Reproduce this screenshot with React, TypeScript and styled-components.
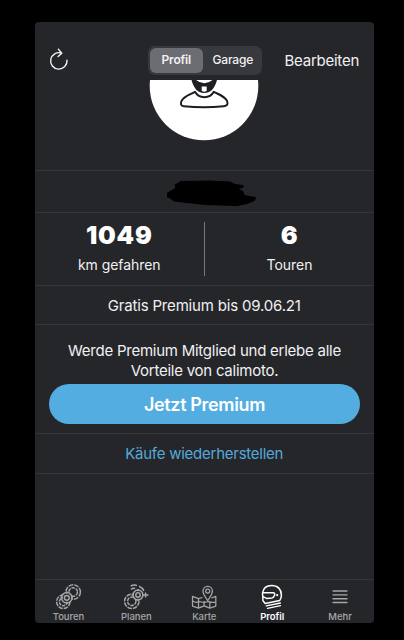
import React from "react";
import styled, { createGlobalStyle } from "styled-components";

const GlobalStyle = createGlobalStyle`
  body { margin: 0; background: #000; }
  * { box-sizing: border-box; }
  button { border: 0; padding: 0; margin: 0; background: none; font: inherit; color: inherit; }
`;

const Screen = styled.div`
  width: 404px;
  height: 640px;
  padding: 22px 30px 17px 34.5px;
  background: #000;
  overflow: hidden;
  font-family: Inter, "Liberation Sans", sans-serif;
  color: #f1f1f2;
`;

const Phone = styled.main`
  width: 339.5px;
  height: 601px;
  display: flex;
  flex-direction: column;
  background: #25262a;
  border-radius: 4px;
  overflow: hidden;
`;

const Header = styled.header`
  height: 58px;
  flex: none;
  padding: 23px 15px 5px 14.5px;
  display: grid;
  grid-template-columns: 99px 114px 97px;
  align-items: center;
`;

const RefreshButton = styled.button`
  width: 20px;
  height: 24px;
  margin-top: -3px;
  display: flex;
`;

const Segments = styled.div`
  height: 29px;
  padding: 2px;
  display: flex;
  border-radius: 7px;
  background: #38393e;
`;

const Segment = styled.button<{ $active?: boolean }>`
  width: ${(p) => (p.$active ? 53 : 57)}px;
  height: 25px;
  padding-left: ${(p) => (p.$active ? 0 : 2)}px;
  margin-left: ${(p) => (p.$active ? 0 : 1)}px;
  border-radius: 6px;
  background: ${(p) => (p.$active ? "#6c6c73" : "transparent")};
  font-size: 12px;
  line-height: 23px;
  padding-bottom: 2px;
  font-weight: ${(p) => (p.$active ? 600 : 500)};
  letter-spacing: ${(p) => (p.$active ? -0.2 : -0.2)}px;
  white-space: nowrap;
`;

const EditButton = styled.button`
  justify-self: end;
  font-size: 15px;
  letter-spacing: -0.25px;
  white-space: nowrap;
`;

const line = "1px solid #35363a";

const AvatarArea = styled.section`
  height: 90px;
  flex: none;
  display: flex;
  justify-content: center;
  overflow: hidden;
`;

const NameRow = styled.section`
  height: 42px;
  flex: none;
  border-top: ${line};
  display: flex;
  justify-content: center;
  padding: 9px 0 0 16px;
`;

const Stats = styled.section`
  height: 73px;
  flex: none;
  border-top: ${line};
  display: grid;
  grid-template-columns: 169.5px 1px 169px;
  padding-top: 9px;
`;

const Divider = styled.div`
  height: 54px;
  background: #77787b;
`;

const Stat = styled.div`
  display: flex;
  flex-direction: column;
  align-items: center;
`;

const StatValue = styled.strong`
  font-size: 25px;
  line-height: 26px;
  font-weight: 900;
  letter-spacing: 0.8px;
  color: #fff;
`;

const StatLabel = styled.span`
  margin-top: 8px;
  font-size: 14px;
  line-height: 18px;
  letter-spacing: -0.05px;
`;

const TextRow = styled.section<{ $height: number; $link?: boolean }>`
  height: ${(p) => p.$height}px;
  flex: none;
  border-top: ${line};
  display: flex;
  align-items: center;
  justify-content: center;
  font-size: 15px;
  letter-spacing: ${(p) => (p.$link ? -0.25 : -0.18)}px;
  color: ${(p) => (p.$link ? "#54a9da" : "inherit")};
`;

const Promo = styled.section`
  height: 109px;
  flex: none;
  border-top: ${line};
  padding: 16px 14px 0 14.5px;
  text-align: center;
`;

const PromoText = styled.p`
  margin: 0 0 4px;
  font-size: 15px;
  line-height: 19.5px;
  letter-spacing: -0.25px;
  white-space: nowrap;
`;

const PremiumButton = styled.button`
  width: 311px;
  height: 40px;
  border-radius: 20px;
  background: #54ade1;
  color: #fff;
  font-size: 18px;
  font-weight: 600;
  letter-spacing: -0.35px;
`;

const Empty = styled.div`
  flex: 1;
  border-top: ${line};
`;

const TabBar = styled.nav`
  height: 44px;
  flex: none;
  border-top: ${line};
  display: grid;
  grid-template-columns: repeat(5, 1fr);
`;

const Tab = styled.button<{ $active?: boolean }>`
  display: flex;
  flex-direction: column;
  align-items: center;
  padding-top: 3px;
  color: ${(p) => (p.$active ? "#fff" : "#a5a6a8")};
  font-size: 9.5px;
  line-height: 12px;
  font-weight: ${(p) => (p.$active ? 600 : 500)};
  letter-spacing: -0.05px;
`;

const TabIcon = styled.svg`
  width: 28px;
  height: 28px;
  fill: none;
  stroke: currentColor;
  overflow: visible;
`;

const TourIcon = () => (
  <TabIcon viewBox="0 0 28 28" strokeWidth="1.5">
    <circle cx="19.2" cy="9" r="7.2" strokeDasharray="4.7 1.1" />
    <circle cx="19.2" cy="9" r="4.3" strokeDasharray="3.6 .9" />
    <circle cx="9.3" cy="18.8" r="6.7" strokeDasharray="4.5 1" />
    <circle cx="9.3" cy="18.8" r="3.9" strokeDasharray="3.2 .9" />
    <circle cx="12.8" cy="14.8" r="5.2" fill="#25262a" />
    <circle cx="12.8" cy="14.8" r="2.4" />
    <path d="M12.8 8.6v2.2M12.8 18.8V21M6.6 14.8h2.2M16.8 14.8H19" />
  </TabIcon>
);

const PlanIcon = () => (
  <TabIcon viewBox="0 0 28 28" strokeWidth="1.5">
    <circle cx="9.8" cy="18.3" r="7.2" strokeDasharray="4.6 1" />
    <circle cx="9.8" cy="18.3" r="4.2" strokeDasharray="3.5 .9" />
    <path d="M8.7 3.2c2.2-1.3 4.3-1.4 6.3-.6M9 6.4c1.4-1 2.7-1.3 4.2-.9M17 3.2c2.4 1 4 2.5 4.9 4.7" />
    <circle cx="16" cy="12" r="4.9" fill="#25262a" />
    <circle cx="16" cy="12" r="2.2" />
    <path d="M9.7 12h2.2M20 12h6.5M16 6v2.2M16 15.8V18M23.6 9.5v5" />
  </TabIcon>
);

const MapIcon = () => (
  <TabIcon viewBox="0 0 28 28" strokeWidth="1.25" strokeLinejoin="round">
    <path d="M12.5 14.5l-4 1.1-6-2.2v9.7l6 2 5.6-2.3 5.7 2.3 6-2v-9.7l-4.5 1.6" />
    <path d="M17.7 17.7c-1.8-3.3-4.7-6-4.7-9.7a4.7 4.7 0 0 1 9.4 0c0 3.7-2.9 6.4-4.7 9.7z" />
    <circle cx="17.7" cy="8" r="2" />
    <path d="M8.5 15.6v9.5M14.1 18v4.8M19.8 19v6.1M2.8 18c2.3 1.7 4.3 1.5 5.5.8 2.2-.7 3.5.8 5.7.6s4.2-1.2 6-.6 3.4 1.2 5.5.2" />
  </TabIcon>
);

const HelmetIcon = () => (
  <TabIcon viewBox="0 0 28 28" strokeWidth="1.5" strokeLinecap="round" strokeLinejoin="round">
    <path d="M7.2 20.5L5 17.8l-.5-7.6C5.2 5.2 8.5 2.5 13.7 2.5c6 0 9.7 3.9 9.7 9.4 0 2.4-.6 4.3-1.7 5.6L7.2 20.5z" />
    <path d="M4.7 9.8h10.4c1.2 0 1.9.8 1.6 1.9l-.5 1.4c-.4 1.2-1.1 1.7-2.3 1.9l-5.4.4-3.5-1.8" />
    <circle cx="19.2" cy="12.2" r="1.1" fill="currentColor" stroke="none" />
    <path d="M8.2 22.9l14.2-2.9M9.5 25.4l13-2.7" strokeWidth="1.3" />
  </TabIcon>
);

const MenuIcon = () => (
  <TabIcon viewBox="0 0 28 28" strokeWidth="1.4">
    <path d="M6.5 8h15M6.5 11.9h15M6.5 15.7h15M6.5 19.5h15" />
  </TabIcon>
);

export default function App() {
  return (
    <>
      <GlobalStyle />
      <Screen>
        <Phone>
          <Header>
            <RefreshButton aria-label="Aktualisieren">
              <svg width="20" height="24" viewBox="0 0 20 24" fill="none" stroke="#f1f1f2" strokeWidth="1.4" strokeLinecap="round" strokeLinejoin="round">
                <path d="M18 13.2a8.2 8.2 0 1 1-5.6-7.1M9.4 2.2l3.4 4-3.7 3.4" />
              </svg>
            </RefreshButton>
            <Segments>
              <Segment $active>Profil</Segment>
              <Segment>Garage</Segment>
            </Segments>
            <EditButton>Bearbeiten</EditButton>
          </Header>
          <AvatarArea>
            <svg width="110" height="61" viewBox="0 0 110 61">
              <circle cx="55" cy="6" r="54.3" fill="#fff" />
              <path d="M42.500 0C45 9 49 13 55.200 13S65.500 9 68 0h-4.500q-8 6.500-16.500 0z" fill="#1e1f22" />
              <path d="M52.700 6.600h5v4.200q-2.500 2-5 0z" fill="#fff" />
              <path d="M46 11.800c-5 3-11 4.200-13.500 9.200-1.200 3-.5 5 2.300 5.200q20 2.200 40 0c3.500-.4 4.500-2 3.300-5.200-2.500-5-8.300-6.400-13.300-9.200-4 7.200-14.800 7.200-18.800 0z" fill="#fff" stroke="#1c1d20" strokeWidth="2" strokeLinejoin="round" />
            </svg>
          </AvatarArea>
          <NameRow>
            <svg width="90" height="28" viewBox="0 0 90 28">
              <path d="M0 13.500L9 8l-1-3 6-3.500L43 1l20 1 5 2.500 8 1v2l-6 1 6 3 1 4 11.500 2-1 3-7.500 3-10 2-32-1-18-2-13-1.500-4-3-5-2z" fill="#000" stroke="#000" strokeLinejoin="round" />
            </svg>
          </NameRow>
          <Stats>
            <Stat>
              <StatValue>1049</StatValue>
              <StatLabel>km gefahren</StatLabel>
            </Stat>
            <Divider />
            <Stat>
              <StatValue>6</StatValue>
              <StatLabel>Touren</StatLabel>
            </Stat>
          </Stats>
          <TextRow $height={39}>Gratis Premium bis 09.06.21</TextRow>
          <Promo>
            <PromoText>
              Werde Premium Mitglied und erlebe alle
              <br />
              Vorteile von calimoto.
            </PromoText>
            <PremiumButton>Jetzt Premium</PremiumButton>
          </Promo>
          <TextRow $height={40} $link>Käufe wiederherstellen</TextRow>
          <Empty />
          <TabBar>
            <Tab><TourIcon />Touren</Tab>
            <Tab><PlanIcon />Planen</Tab>
            <Tab><MapIcon />Karte</Tab>
            <Tab $active><HelmetIcon />Profil</Tab>
            <Tab><MenuIcon />Mehr</Tab>
          </TabBar>
        </Phone>
      </Screen>
    </>
  );
}
